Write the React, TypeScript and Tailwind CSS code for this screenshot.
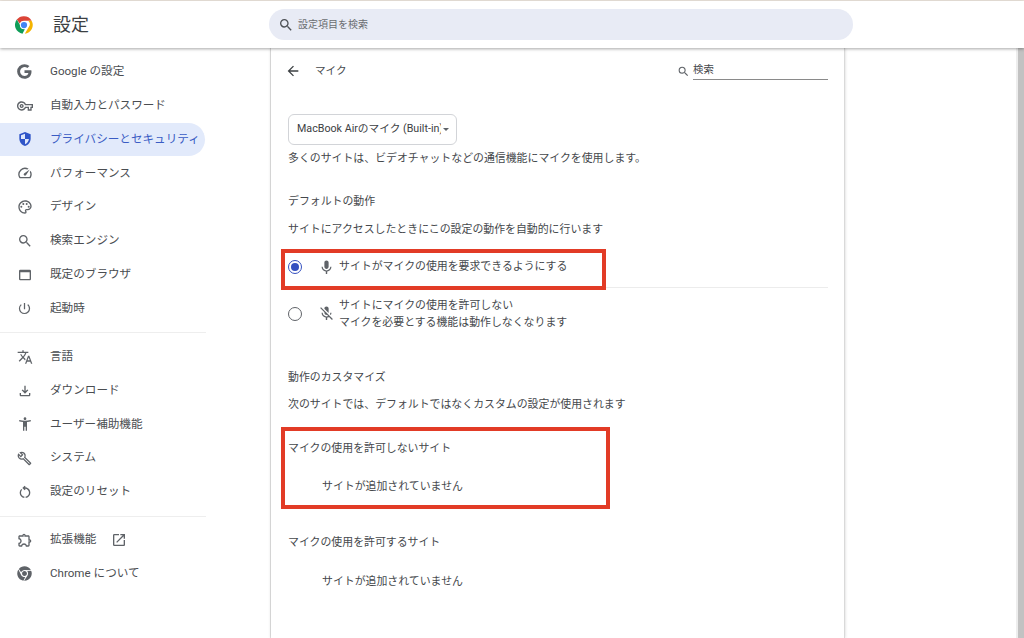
import React from 'react';
import { FaChrome } from 'react-icons/fa';
import {
  MdAccessibilityNew,
  MdArrowBack,
  MdMic,
  MdMicOff,
  MdOpenInNew,
  MdOutlineBuild,
  MdOutlineExtension,
  MdOutlineFileDownload,
  MdOutlinePalette,
  MdOutlineSpeed,
  MdOutlineVpnKey,
  MdOutlineWebAsset,
  MdPowerSettingsNew,
  MdOutlineRestartAlt,
  MdSearch,
  MdTranslate,
} from 'react-icons/md';

const FONT = '[font-family:Roboto,"Noto_Sans_CJK_JP","Liberation_Sans",sans-serif]';

const GoogleG = () => (
  <svg viewBox="0 0 24 24" className="w-[17px] h-[17px]" fill="#5f6368">
    <path d="M21.6 10.2H12v3.9h5.5c-.5 2.6-2.7 4.2-5.5 4.2a6.3 6.3 0 1 1 4.1-11.1l2.9-2.9A10.3 10.3 0 0 0 12 1.6a10.4 10.4 0 1 0 0 20.8c5.2 0 9.9-3.8 9.9-10.4 0-.6-.1-1.2-.3-1.8z" />
  </svg>
);

const ShieldIcon = () => (
  <svg viewBox="0 0 24 24" className="w-4 h-4">
    <path fill="#2f55c8" d="M12 1.5 3.5 5v6.2c0 5.2 3.6 10 8.5 11.3 4.9-1.3 8.5-6.1 8.5-11.3V5L12 1.5z" />
    <path fill="#dfe8fb" d="M12 4 6 6.5V12h6V4zm0 8v8c2.9-1 5.4-4.2 5.9-8H12z" />
  </svg>
);

const ChromeLogo = () => (
  <svg viewBox="0 0 48 48" className="w-5 h-5">
    <path fill="#db4437" d="M24 3a21 21 0 0 1 18.2 10.5H24a10.5 10.5 0 0 0-10 7.3L6.8 11A21 21 0 0 1 24 3z" />
    <path fill="#f4b400" d="M42.2 13.5A21 21 0 0 1 26 44.9l9-15.6a10.5 10.5 0 0 0-.9-15.8h8.1z" />
    <path fill="#0f9d58" d="M6.8 11 14 23.5a10.5 10.5 0 0 0 12 10.8l-5.6 10.4A21 21 0 0 1 6.8 11z" />
    <circle cx="24" cy="24" r="9.5" fill="#fff" />
    <circle cx="24" cy="24" r="7.5" fill="#4285f4" />
  </svg>
);

const iconClass = 'w-4 h-4';

const topItems = [
  { label: 'Google の設定', icon: <GoogleG /> },
  { label: '自動入力とパスワード', icon: <MdOutlineVpnKey className={iconClass} /> },
  { label: 'プライバシーとセキュリティ', icon: <ShieldIcon />, active: true },
  { label: 'パフォーマンス', icon: <MdOutlineSpeed className={iconClass} /> },
  { label: 'デザイン', icon: <MdOutlinePalette className={iconClass} /> },
  { label: '検索エンジン', icon: <MdSearch className={iconClass} /> },
  { label: '既定のブラウザ', icon: <MdOutlineWebAsset className={iconClass} /> },
  { label: '起動時', icon: <MdPowerSettingsNew className="w-[15px] h-[15px]" /> },
];

const midItems = [
  { label: '言語', icon: <MdTranslate className={iconClass} /> },
  { label: 'ダウンロード', icon: <MdOutlineFileDownload className={iconClass} /> },
  { label: 'ユーザー補助機能', icon: <MdAccessibilityNew className={iconClass} /> },
  { label: 'システム', icon: <MdOutlineBuild className="w-[15px] h-[15px]" /> },
  { label: '設定のリセット', icon: <MdOutlineRestartAlt className={iconClass} /> },
];

const NavItem: React.FC<{ label: string; icon: React.ReactNode; active?: boolean; children?: React.ReactNode }> = ({
  label,
  icon,
  active,
  children,
}) => (
  <div
    className={`flex items-center h-[33.8px] w-[205px] pl-[16px] gap-[17px] rounded-r-full text-[11.6px] ${
      active ? 'bg-[#e2eafb] text-[#3a5cc4]' : 'text-[#4a4d51]'
    }`}
  >
    <span className="w-[17px] flex items-center justify-center text-[#5f6368] shrink-0">{icon}</span>
    <span className="whitespace-nowrap">{label}</span>
    {children}
  </div>
);

const Sidebar = () => (
  <aside className="w-[271px] shrink-0 pt-[7px] border-r border-[#e4e4e4]">
    {topItems.map((item) => (
      <NavItem key={item.label} {...item} />
    ))}
    <div className="w-[206px] h-px bg-[#eeeeee] mt-[7px] mb-[6.5px]" />
    {midItems.map((item) => (
      <NavItem key={item.label} {...item} />
    ))}
    <div className="w-[206px] h-px bg-[#eeeeee] mt-[7px] mb-[6px]" />
    <NavItem label="拡張機能" icon={<MdOutlineExtension className={iconClass} />}>
      <MdOpenInNew className="w-[16px] h-[16px] text-[#5f6368] ml-[-2px]" />
    </NavItem>
    <NavItem label="Chrome について" icon={<FaChrome className="w-[15px] h-[15px]" />} />
  </aside>
);

const Radio: React.FC<{ checked?: boolean }> = ({ checked }) => (
  <span
    className={`w-[14px] h-[14px] rounded-full border-[1.5px] flex items-center justify-center shrink-0 ${
      checked ? 'border-[#3450c0]' : 'border-[#5f6368]'
    }`}
  >
    {checked && <span className="w-[8px] h-[8px] rounded-full bg-[#3450c0]" />}
  </span>
);

const Card = () => (
  <main className="relative w-[574px] shrink-0 border-r border-[#d9d9d9] shadow-[0_0_3px_rgba(0,0,0,0.18)] pl-[17px] pr-[16px] text-[10.9px] text-[#45484c]">
    <div className="flex items-center h-[46px]">
      <MdArrowBack className="w-[16px] h-[16px] text-[#3c4043] ml-[-3px]" />
      <span className="ml-[14px] text-[10.6px]">マイク</span>
      <div className="ml-auto flex items-center">
        <MdSearch className="w-[13px] h-[13px] text-[#5f6368] mr-[3px]" />
        <div className="w-[135px] h-[16px] border-b border-[#8a8a8a] text-[10.4px] leading-[12px] mt-[1px]">検索</div>
      </div>
    </div>

    <div className="mt-[20px] flex items-center w-[169px] h-[31px] border border-[#d2d4d8] rounded-[6px] pl-[8px] pr-[6px] text-[#3c4043]">
      <span className="whitespace-nowrap overflow-hidden w-[144px] text-[10.7px]">MacBook Airのマイク (Built-in)</span>
      <span className="ml-[2px] w-0 h-0 border-x-[3px] border-x-transparent border-t-[3px] border-t-[#5f6368]" />
    </div>
    <p className="mt-[6px] h-[16px] leading-[16px]">多くのサイトは、ビデオチャットなどの通信機能にマイクを使用します。</p>

    <h3 className="mt-[27px] h-[16px] leading-[16px]">デフォルトの動作</h3>
    <p className="mt-[12px] h-[16px] leading-[16px]">サイトにアクセスしたときにこの設定の動作を自動的に行います</p>

    <div className="mt-[11px] h-[39px] flex items-center border-b border-[#ececec] pb-[2px]">
      <Radio checked />
      <MdMic className="ml-[16px] w-[17px] h-[17px] text-[#5f6368] shrink-0" />
      <span className="ml-[4px]">サイトがマイクの使用を要求できるようにする</span>
    </div>
    <div className="h-[51px] flex items-center">
      <Radio />
      <MdMicOff className="ml-[16px] w-[17px] h-[17px] text-[#5f6368] shrink-0" />
      <div className="ml-[4px] leading-[17px]">
        <div>サイトにマイクの使用を許可しない</div>
        <div>マイクを必要とする機能は動作しなくなります</div>
      </div>
    </div>

    <h3 className="mt-[31px] h-[16px] leading-[16px]">動作のカスタマイズ</h3>
    <p className="mt-[11px] h-[16px] leading-[16px]">次のサイトでは、デフォルトではなくカスタムの設定が使用されます</p>

    <h3 className="mt-[28px] h-[16px] leading-[16px]">マイクの使用を許可しないサイト</h3>
    <p className="mt-[22px] h-[16px] leading-[16px] pl-[34px]">サイトが追加されていません</p>

    <h3 className="mt-[40px] h-[16px] leading-[16px]">マイクの使用を許可するサイト</h3>
    <p className="mt-[23px] h-[16px] leading-[16px] pl-[34px]">サイトが追加されていません</p>

    {/* annotation boxes drawn over the screenshot */}
    <div className="absolute left-[10px] top-[201px] w-[325px] h-[41px] border-[4px] border-[#e23b26]" />
    <div className="absolute left-[10px] top-[379px] w-[329px] h-[82px] border-[4px] border-[#e23b26]" />
  </main>
);

export default function App() {
  return (
    <div className={`h-screen overflow-hidden flex flex-col bg-white ${FONT}`}>
      <div className="h-px bg-[#efe7df] shrink-0" />
      <header className="relative z-10 h-[47px] shrink-0 flex items-center bg-white shadow-[0_1px_3px_rgba(0,0,0,0.35)]">
        <div className="w-[269px] shrink-0 flex items-center pl-[14px]">
          <ChromeLogo />
          <span className="ml-[19px] text-[18px] text-[#3c4043]">設定</span>
        </div>
        <div className="w-[584px] h-[31px] rounded-full bg-[#e8ebf5] flex items-center pl-[9px] text-[10px] text-[#6b6e72]">
          <MdSearch className="w-[16px] h-[16px] text-[#4d5156]" />
          <span className="ml-[4px]">設定項目を検索</span>
        </div>
      </header>
      <div className="flex flex-1 min-h-0">
        <Sidebar />
        <Card />
        <div className="flex-1" />
        <div className="w-[8px] shrink-0 bg-[#f5f5f5] border-l-[2px] border-[#ededed]">
          <div className="ml-auto w-[6px] h-full bg-[#c2c2c2]" />
        </div>
      </div>
    </div>
  );
}
